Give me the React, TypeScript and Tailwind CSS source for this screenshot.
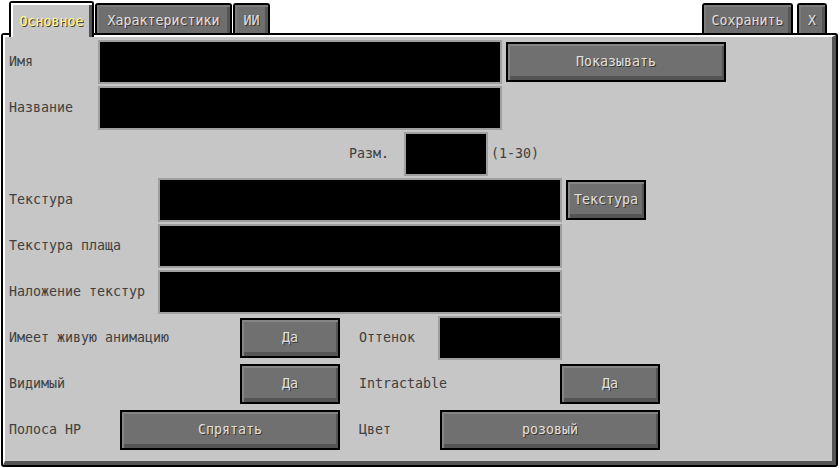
import React from "react";

const font = "font-['DejaVu_Sans_Mono','Liberation_Mono',monospace] text-[13.3px] leading-none";

const Field = ({ w }: { w: string }) => (
  <div className={`${w} h-[44px] border-2 border-[#a0a0a0] bg-black`} />
);

const Btn = ({ w, label }: { w: string; label: string }) => (
  <div className={`${w} h-[40px] border-2 border-black bg-black`}>
    <div className="w-full h-full bg-[#707070] shadow-[inset_2px_2px_0_#858585,inset_-2px_-4px_0_#555555] flex items-center justify-center">
      <span className="text-[#e0e0e0] [text-shadow:1px_1px_0_#383838]">{label}</span>
    </div>
  </div>
);

const Label = ({ w, text }: { w: string; text: string }) => (
  <div className={`${w} shrink-0 text-[#404040]`}>{text}</div>
);

const Tab = ({ w, label }: { w: string; label: string }) => (
  <div className={`${w} h-[32px] rounded-t-[3px] border-2 border-b-0 border-black bg-black`}>
    <div className="w-full h-full bg-[#6f6f6f] shadow-[inset_2px_2px_0_#7c7c7c,inset_-3px_0_0_#555555] flex items-center justify-center pt-[1px]">
      <span className="text-[#e0e0e0] [text-shadow:1px_1px_0_#383838]">{label}</span>
    </div>
  </div>
);

export default function App() {
  return (
    <div className={`w-[840px] h-[468px] bg-white overflow-hidden ${font}`}>
      {/* tabs */}
      <div className="h-[35px] flex items-end pl-[9px] pr-[13px]">
        <div className="relative z-20 self-start mt-[1px] w-[85px] h-[36px] rounded-t-[3px] border-2 border-b-0 border-black bg-black">
          <div className="w-full h-full bg-[#c6c6c6] shadow-[inset_2px_2px_0_#ffffff,inset_-3px_0_0_#555555] flex items-center justify-center pt-[4px]">
            <span className="text-[#ffff90] [text-shadow:1px_1px_0_#3f3f28]">Основное</span>
          </div>
        </div>
        <div className="ml-[1px] flex items-end gap-[1px]">
          <Tab w="w-[137px]" label="Характеристики" />
          <Tab w="w-[37px]" label="ИИ" />
        </div>
        <div className="ml-auto flex items-end gap-[4px]">
          <Tab w="w-[91px]" label="Сохранить" />
          <Tab w="w-[30px]" label="X" />
        </div>
      </div>

      {/* panel */}
      <div className="relative z-10 -mt-[2px] ml-[1px] w-[837px] h-[434px] rounded-[3px] bg-black p-[2px]">
        <div className="w-full h-full bg-[#c6c6c6] border-t-2 border-l-2 border-white border-r-4 border-b-4 border-r-[#555555] border-b-[#555555] pt-[3px] pl-[4px] flex flex-col gap-[2px]">
          <div className="h-[44px] flex items-center">
            <Label w="w-[89px]" text="Имя" />
            <Field w="w-[404px]" />
            <div className="ml-[4px]">
              <Btn w="w-[220px]" label="Показывать" />
            </div>
          </div>
          <div className="h-[44px] flex items-center">
            <Label w="w-[89px]" text="Название" />
            <Field w="w-[404px]" />
          </div>
          <div className="h-[44px] flex items-center">
            <div className="w-[340px] shrink-0" />
            <Label w="w-[55px]" text="Разм." />
            <Field w="w-[84px]" />
            <span className="ml-[3px] text-[#404040]">(1-30)</span>
          </div>
          <div className="h-[44px] flex items-center">
            <Label w="w-[149px]" text="Текстура" />
            <Field w="w-[404px]" />
            <div className="ml-[4px]">
              <Btn w="w-[80px]" label="Текстура" />
            </div>
          </div>
          <div className="h-[44px] flex items-center">
            <Label w="w-[149px]" text="Текстура плаща" />
            <Field w="w-[404px]" />
          </div>
          <div className="h-[44px] flex items-center">
            <Label w="w-[149px]" text="Наложение текстур" />
            <Field w="w-[404px]" />
          </div>
          <div className="h-[44px] flex items-center">
            <Label w="w-[231px]" text="Имеет живую анимацию" />
            <Btn w="w-[100px]" label="Да" />
            <Label w="w-[79px] ml-[19px]" text="Оттенок" />
            <Field w="w-[124px]" />
          </div>
          <div className="h-[44px] flex items-center">
            <Label w="w-[231px]" text="Видимый" />
            <Btn w="w-[100px]" label="Да" />
            <Label w="w-[201px] ml-[19px]" text="Intractable" />
            <Btn w="w-[100px]" label="Да" />
          </div>
          <div className="h-[44px] flex items-center">
            <Label w="w-[111px]" text="Полоса HP" />
            <Btn w="w-[220px]" label="Спрятать" />
            <Label w="w-[81px] ml-[19px]" text="Цвет" />
            <Btn w="w-[220px]" label="розовый" />
          </div>
        </div>
      </div>
    </div>
  );
}
